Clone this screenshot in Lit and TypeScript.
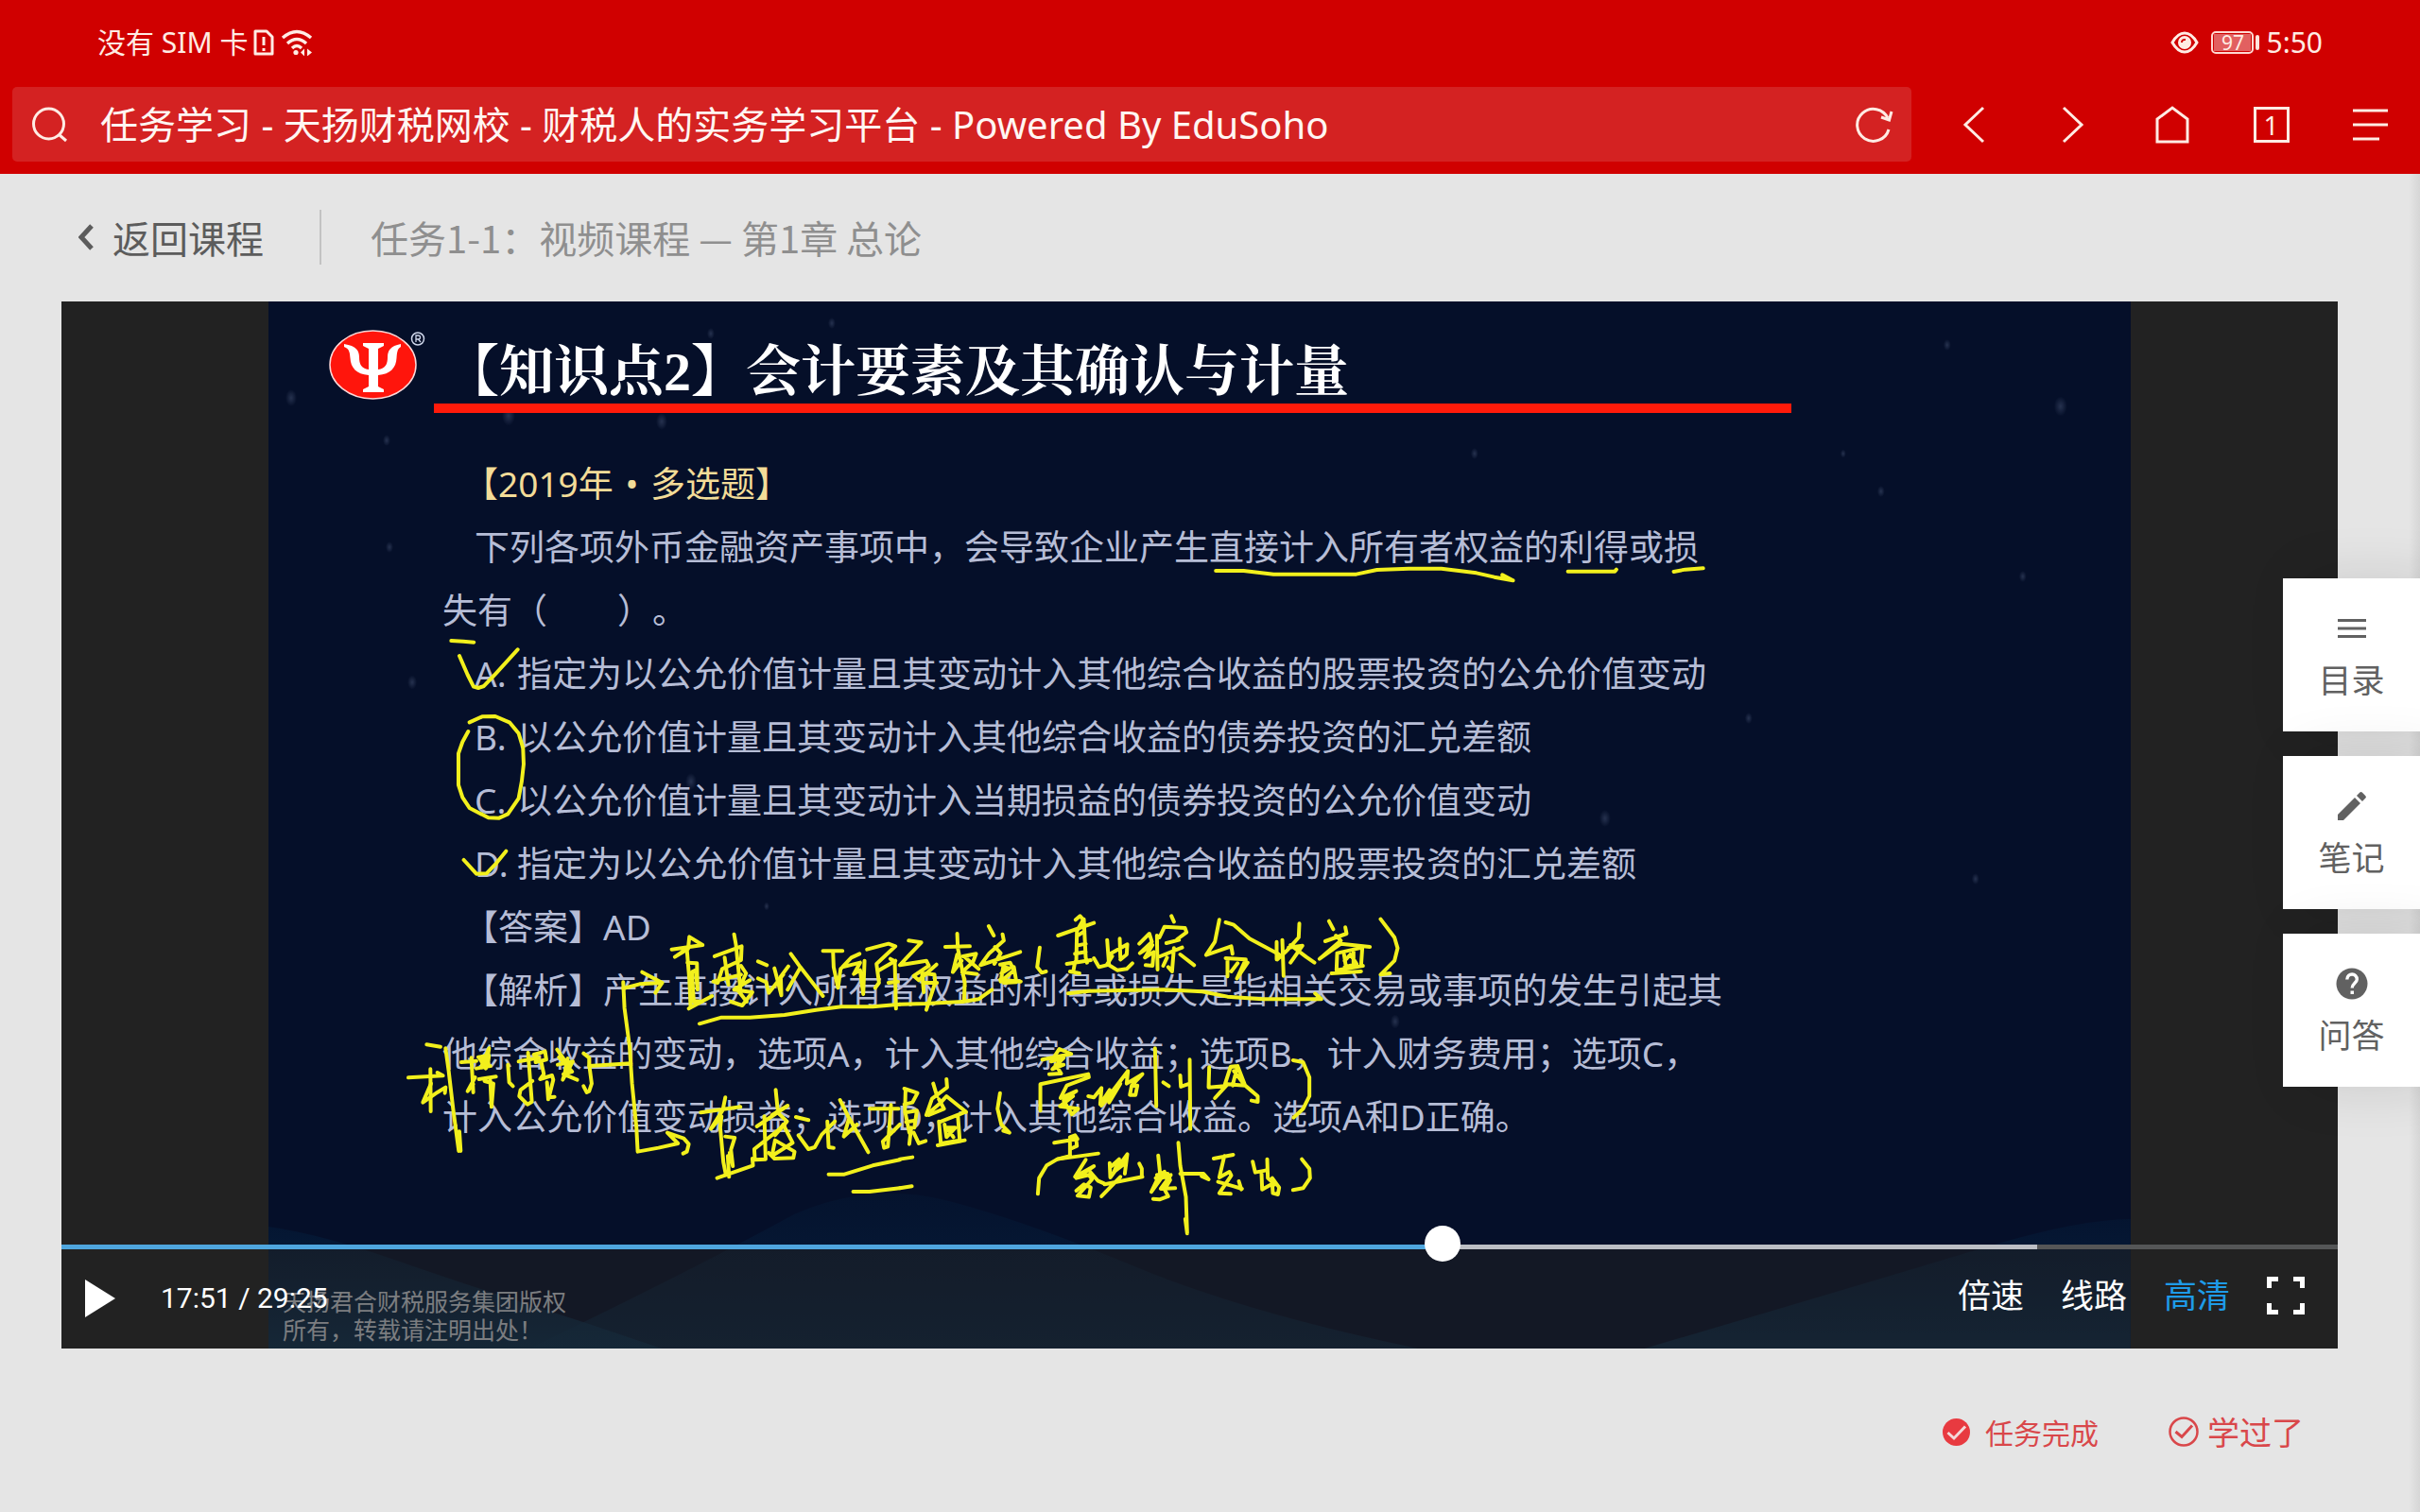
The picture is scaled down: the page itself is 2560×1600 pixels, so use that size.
import { LitElement, html, svg, css } from "lit";
import { customElement, property, state } from "lit/decorators.js";

interface InkGroup {
  transform: string;
  paths: string[];
}

/* Pen strokes drawn by the lecturer, grouped by region of the slide. */
const INK: InkGroup[] = [
  {
    transform: "translate(1200 540) scale(.4209 .3333)",
    paths: [
      "M205 192H275L350 203H558L610 189L690 185H772L860 199L905 212L952 223M925 205L952 223L930 217",
      "M1090 194H1208L1212 188",
      "M1356 195L1385 188L1430 184",
    ],
  },
  {
    transform: "translate(400 660) scale(.3333)",
    paths: [
      "M232 54L270 56L304 59",
      "M258 102L284 162L303 200L318 204L336 198L372 160L443 82",
      "M290 313L330 295L372 294L418 314L446 348L460 394L462 446L456 500L446 555L412 604L384 617L350 616L290 585L268 552L255 512V412L268 375L286 342",
      "M272 750L312 794L344 793L372 764L406 722",
    ],
  },
  {
    transform: "translate(430 960) scale(.3333)",
    paths: [
      "M64 436L108 443",
      "M6 541L116 535L98 525",
      "M76 514L77 648",
      "M78 560L52 620L98 588L124 572L122 590",
      "M124 448L134 520L148 640L166 774M168 712L172 774L162 740",
      "M174 492L222 488M206 478L212 588M218 540L194 584L212 562",
      "M228 476L262 470L258 502L232 480L252 512L262 448L240 500",
      "M222 512L266 504M230 546L284 538M266 550L270 634L276 560L248 552",
      "M322 500L326 556L338 568",
      "M356 490L420 478M386 462L398 618L384 626L358 600L362 580L400 552",
      "M404 468L440 458L444 484L410 492L412 466M428 492L436 530L424 546L462 534L466 548L452 604L470 602M446 556L450 610",
      "M478 452L512 500L496 548L528 490L480 500M484 476L526 522L498 530L542 548M512 480L500 540",
      "M562 464L580 478V500L588 560L580 584L572 588L562 568",
      "M580 504L712 496",
      "M688 238L692 320L708 440L716 560L730 700L734 776L800 764L862 750L828 716L880 734L896 752L890 776L878 782",
      "M688 258L740 244L812 240L748 206M812 240L790 272",
      "M842 134L940 120L898 94L894 132L852 158L890 132L898 230L902 316",
      "M892 176L922 178L924 262L918 200L906 206L912 300M896 322L970 282M902 296L938 300",
      "M1040 86L1046 120L1060 260M978 156L1064 124L1062 168L1002 196L988 240L974 236L1062 214",
      "M1010 160L1022 246M1062 186L1078 210L1060 250L1090 232L1040 262L1098 270L1066 312L1030 300M1046 256L1080 300",
      "M1116 172L1144 184M1116 226L1142 238L1150 272L1196 214M1168 194L1180 240L1190 280L1188 220L1212 188",
      "M1220 148L1250 190L1322 282M1250 192L1210 262",
      "M1322 139H1384M1354 142L1356 190L1370 256L1378 196L1412 160L1438 148M1384 190L1440 176L1420 212L1440 200L1450 276L1454 170",
      "M1462 134L1530 116L1552 124L1492 180L1500 240L1488 256M1536 164L1550 172L1554 322",
      "M1552 170L1500 200M1530 240L1560 236",
      "M930 370L1000 350L1090 350L1200 342L1300 326L1380 316L1480 316L1566 308",
      "M934 652L1060 634M1012 604L1004 644L966 704L1000 664L996 700L1006 810L1014 850",
      "M1012 728L1042 732L1030 770L1036 822L1026 780M1020 790L1024 856M986 860L1100 820L1098 798",
      "M1172 580L1178 640M1112 696L1210 630L1160 660M1136 664L1140 800L1106 802L1104 768L1190 700",
      "M1176 650L1208 680L1170 724L1196 690L1226 748L1160 790L1170 740L1232 776L1228 796L1168 798L1150 780",
      "M1236 666L1276 676M1244 724L1276 768L1296 762L1318 722L1360 680M1336 680L1340 762L1356 764",
      "M1376 612L1400 660L1466 778M1404 674L1388 728L1430 690",
      "M1470 640L1562 640M1538 628L1528 760L1516 764L1512 744L1566 690",
      "M1340 848H1390L1480 820L1566 802",
      "M1418 903H1470L1566 892",
    ],
  },
  {
    transform: "translate(952 960) scale(.3333)",
    paths: [
      "M0 308L80 306L200 300L250 292L292 262",
      "M28 106L68 112L24 158L0 184L84 170L92 186L44 218L60 232L116 182",
      "M70 206L76 270L72 210L110 214L112 240L84 326M80 240H118",
      "M144 126L222 124M182 84L184 130L206 240L204 296M182 150L168 206L196 170",
      "M200 156L242 148L232 174L198 206L244 212M208 160L250 196",
      "M282 60L298 90M326 86L330 106L284 146L256 184L382 142M302 126L320 146L300 180",
      "M318 182L350 176L362 200L320 236L328 190L348 194L322 210M318 230L384 236M362 190L370 238L330 240",
      "M444 128L436 190L450 208L464 204",
      "M502 90L616 50M558 40L572 28L582 40L562 76L560 170M584 38L590 160L594 176M562 92L586 76M562 122L590 116M556 148L590 142",
      "M530 180L606 168M556 174L550 206M540 204L570 210",
      "M616 162L632 190L656 184L674 156M658 104L664 184M664 150L722 118L720 150L700 166M698 100L700 160M664 184L690 200L720 196L738 178",
      "M760 116L792 84L800 110L762 146L802 120L778 160L806 142L802 186L780 184",
      "M862 28L870 46M824 96L840 62L905 66L910 80L880 102M846 114L886 104M826 156L896 128M870 130L864 204L852 190M848 160L836 186M890 150L934 184M816 90L818 198",
      "M1014 40L1000 110L972 152L1052 124L1056 148M1034 48L1060 56L1110 100L1204 150",
      "M1034 162L1098 166L1070 226L1104 176M1040 168V220M1072 178L1052 204",
      "M1196 110V166M1214 104L1218 218M1198 166L1226 140",
      "M1268 52L1266 96L1230 136M1234 128L1278 122L1240 176M1240 120L1290 158L1316 176",
      "M1362 44L1376 70M1414 64L1418 84L1350 108M1384 90L1400 106L1332 164L1400 116L1492 126",
      "M1388 148L1386 200L1470 186M1388 146L1468 128L1464 186M1410 150L1416 190M1440 140V184M1412 170L1430 150L1450 180L1412 190M1370 210L1464 204",
      "M1526 38L1570 96L1580 130L1570 170L1526 214L1556 210",
      "M534 274L600 266L700 264L840 262L960 268L1040 284L1150 292L1338 292L1318 274",
      "M452 484L544 466L506 450L480 490L520 478L484 514L520 500L494 500L512 528L474 530",
      "M446 646V562L598 530L600 540L530 566L510 606L560 584L520 610L550 600L508 632L566 640L546 658L520 614",
      "M598 600L616 604L640 574L636 626L666 580L664 620L700 560L640 630L724 520L720 560L770 530L736 566L730 596L748 596L754 566L736 568",
      "M810 448L814 632M836 556L854 568M890 534L892 570L920 560M920 484L922 704",
      "M982 508L980 572L1030 568L1050 506L1072 504L1096 566L1040 562L1000 606M1072 504L1056 566M1060 520L1096 566L1136 600L1136 618L1116 614",
      "M1248 486L1280 492L1300 540V600L1280 640L1250 668",
      "M106 560L118 600M148 546L150 572L102 608L84 660L130 620L148 600L210 650M124 610L140 640L92 660",
      "M124 680L130 750L190 740M126 682L208 650L184 660L190 740M142 690L148 730L176 700L150 700L170 730M120 756L206 740",
      "M14 576L56 590L40 620L14 626M18 580L16 650M16 652L54 646L46 700M18 656L30 716M20 682L44 678M36 700L30 752M44 716L60 750L82 742",
      "M318 590L310 640L322 690L348 716L328 710",
      "M490 748L564 736L556 724L540 730V790L500 800L630 782M540 768L562 758L560 740",
      "M438 910L442 860L466 820L500 800L530 794",
      "M590 802L556 856L616 822L560 860L600 850L610 864L564 916L600 920L606 890L584 880L560 900M604 840L628 868L650 878",
      "M666 812L668 858L722 784L714 846M672 822L696 800L680 840L716 812M650 880L770 856M760 814L768 830V856M700 856L640 918",
      "M820 788L826 846L798 904L830 860L860 850L828 894L874 892M816 850L850 846L858 866L840 896L852 918L824 928L804 926M812 860L840 840L846 860",
      "M884 748L890 820L908 920L912 1036L906 990M890 846L964 846L980 864L958 854",
      "M996 798L1058 786M1030 790L1014 858L1046 840L1052 852L1014 908L1050 910M1010 872L1060 886L1086 894M1076 870L1084 896",
      "M1120 808L1128 842L1160 836M1166 800L1168 860L1190 880M1148 846L1150 896L1190 874M1182 860L1204 890L1200 912L1184 908L1182 876",
      "M1276 800L1300 830L1302 860L1280 892L1248 898",
      "M0 800L40 794M0 892L38 886",
    ],
  },
];

const STARS: [number, number, number][] = [
  [308, 421, 6], [538, 440, 7], [700, 446, 6], [409, 466, 4], [412, 579, 4],
  [752, 353, 4], [880, 342, 4], [436, 722, 5], [731, 827, 6], [811, 959, 3],
  [2180, 430, 7], [2060, 365, 4], [1990, 520, 4], [2140, 610, 4], [1698, 866, 6],
  [1476, 1081, 5], [1850, 760, 4], [2090, 930, 4], [1950, 480, 3], [1560, 480, 4],
];

const OPTIONS = [
  ["A.", "指定为以公允价值计量且其变动计入其他综合收益的股票投资的公允价值变动"],
  ["B.", "以公允价值计量且其变动计入其他综合收益的债券投资的汇兑差额"],
  ["C.", "以公允价值计量且其变动计入当期损益的债券投资的公允价值变动"],
  ["D.", "指定为以公允价值计量且其变动计入其他综合收益的股票投资的汇兑差额"],
];

const clock = (s: number) =>
  `${Math.floor(s / 60)}:${String(Math.floor(s % 60)).padStart(2, "0")}`;

@customElement("browser-bar")
class BrowserBar extends LitElement {
  static styles = css`
    :host {
      display: block;
      background: #d00000;
      color: #ffece4;
      font-family: "Noto Sans", "Noto Sans CJK SC", sans-serif;
    }
    .status {
      display: flex;
      justify-content: space-between;
      align-items: center;
      height: 92px;
      padding: 0 103px 2px;
      box-sizing: border-box;
      font-size: 30px;
      line-height: 40px;
    }
    .group {
      display: flex;
      align-items: center;
    }
    .sim {
      margin-left: 6px;
    }
    .wifi {
      margin-left: 7px;
    }
    .battery {
      display: flex;
      align-items: center;
      margin: 0 7px 0 13px;
    }
    .cell {
      width: 45px;
      height: 24px;
      padding: 1px;
      box-sizing: border-box;
      border: 2px solid #ffd9d2;
      border-radius: 5px;
      display: flex;
    }
    .level {
      flex: 1;
      background: #e26060;
      font-size: 21px;
      line-height: 18px;
      text-align: center;
    }
    .nub {
      width: 4px;
      height: 16px;
      margin-left: 2px;
      border-radius: 2px;
      background: #ffe3dc;
    }
    .toolbar {
      display: flex;
      padding: 0 0 13px 13px;
    }
    .address {
      flex: 1;
      display: flex;
      align-items: center;
      height: 79px;
      margin-right: 13px;
      padding: 0 19px 0 21px;
      border-radius: 5px;
      background: #d42222;
    }
    .url {
      flex: 1;
      margin: 0 20px 0 34px;
      padding: 0;
      border: 0;
      outline: 0;
      background: none;
      color: #fff6f2;
      font: 40px/54px "Noto Sans", "Noto Sans CJK SC", sans-serif;
    }
    button {
      display: grid;
      place-items: center;
      padding: 0;
      border: 0;
      background: none;
      color: inherit;
    }
    .tool {
      width: 105px;
    }
    svg {
      display: block;
      fill: none;
      stroke: currentColor;
      stroke-width: 3;
    }
    .tabs {
      width: 38px;
      height: 38px;
      box-sizing: border-box;
      border: 3px solid currentColor;
      font: 28px/32px "Noto Sans", sans-serif;
      text-align: center;
    }
  `;

  render() {
    return html`
      <div class="status">
        <div class="group">
          <span>没有 SIM 卡</span>
          <svg class="sim" width="22" height="28" viewBox="0 0 22 28">
            <path d="M2 2H14L20 8V26H2Z" stroke-linejoin="round" />
            <path d="M11 8V17M11 20V23" />
          </svg>
          <svg class="wifi" width="34" height="28" viewBox="0 0 34 28">
            <path d="M2 9Q17 -4 32 9M7 15Q17 6 27 15M12 20Q17 15 22 20" stroke-width="3.4" />
            <circle cx="16" cy="24.5" r="2.6" fill="currentColor" stroke="none" />
            <path d="M21 24.500L25 20.500V28.500ZM33 24.500L28 20.500V28.500Z" fill="currentColor" stroke="none" />
          </svg>
        </div>
        <div class="group">
          <svg width="30" height="24" viewBox="0 0 30 24">
            <path d="M2 12C6 5 10 2 15 2S24 5 28 12C24 19 20 22 15 22S6 19 2 12Z" />
            <circle cx="15" cy="12" r="7" fill="currentColor" stroke="none" />
            <path d="M12 12Q12 8.500 16 9" stroke="#d00000" stroke-width="2" />
          </svg>
          <div class="battery">
            <span class="cell"><span class="level">97</span></span><span class="nub"></span>
          </div>
          <span>5:50</span>
        </div>
      </div>
      <div class="toolbar">
        <div class="address">
          <svg width="38" height="38" viewBox="0 0 38 38">
            <circle cx="17.500" cy="18" r="16" />
            <path d="M28 29L36 36" />
          </svg>
          <input
            class="url"
            type="text"
            aria-label="地址"
            .value=${"任务学习 - 天扬财税网校 - 财税人的实务学习平台 - Powered By EduSoho"}
          />
          <button aria-label="刷新">
            <svg width="40" height="38" viewBox="0 0 40 38">
              <path d="M35 24A17 17 0 1 1 34 12" />
              <path d="M38 5L35.500 14L27 11" />
            </svg>
          </button>
        </div>
        <button class="tool" aria-label="后退">
          <svg width="24" height="40" viewBox="0 0 24 40"><path d="M22 2L3 20L22 38" /></svg>
        </button>
        <button class="tool" aria-label="前进">
          <svg width="24" height="40" viewBox="0 0 24 40"><path d="M2 2L21 20L2 38" /></svg>
        </button>
        <button class="tool" aria-label="主页">
          <svg width="36" height="42" viewBox="0 0 36 42"><path d="M2 39V15L18 3L34 15V39Z" /></svg>
        </button>
        <button class="tool" aria-label="标签页"><span class="tabs">1</span></button>
        <button class="tool" aria-label="菜单">
          <svg width="38" height="34" viewBox="0 0 38 34"><path d="M0 2H37M0 17H37M0 32H28" /></svg>
        </button>
      </div>
    `;
  }
}

@customElement("lesson-slide")
class LessonSlide extends LitElement {
  static styles = css`
    :host {
      position: relative;
      display: flex;
      flex-direction: column;
      padding: 30px 0 6px 64px;
      box-sizing: border-box;
      background: #050f29;
      color: #b6bdd6;
      text-spacing-trim: space-all;
      white-space: nowrap;
    }
    .scene,
    .ink {
      position: absolute;
      inset: 0;
      width: 100%;
      height: 100%;
    }
    .stroke {
      fill: none;
      stroke: #f2f01c;
      stroke-width: 4px;
      stroke-linecap: round;
      stroke-linejoin: round;
      vector-effect: non-scaling-stroke;
    }
    .head {
      position: relative;
      display: flex;
      gap: 7px;
      margin-right: 359px;
    }
    .logo {
      flex: none;
    }
    .title {
      flex: 1;
      margin: 6px 0 0;
      padding: 6px 0 0 11px;
      border-bottom: 10px solid #ff1a0a;
      color: #fff;
      font: 700 58px/66px "Liberation Serif", "Noto Serif CJK SC", "Noto Sans CJK SC", serif;
    }
    .body {
      position: relative;
      margin: 41px 0 0 120px;
      font: 37px/67px "Noto Sans", "Noto Sans CJK SC", sans-serif;
    }
    p,
    ol {
      margin: 0;
      padding: 0;
      list-style: none;
    }
    .indent {
      padding-left: 34px;
    }
    .note {
      padding-left: 22px;
    }
    .tag {
      color: #f3dc98;
    }
    .dot {
      padding: 0 3px;
    }
    .option {
      display: grid;
      grid-template-columns: 45px 1fr;
    }
    .copyright {
      position: relative;
      margin: auto 0 0 -49px;
      color: #d5d8de;
      font: 25px/30px "Noto Sans CJK SC", sans-serif;
    }
  `;

  render() {
    return html`
      <svg class="scene" viewBox="284 319 1970 1108" preserveAspectRatio="none" aria-hidden="true">
        <defs>
          <linearGradient id="wave" x1="0" y1="0" x2="0" y2="1">
            <stop offset="0" stop-color="#04203f" stop-opacity=".4" />
            <stop offset="1" stop-color="#0a3050" stop-opacity=".9" />
          </linearGradient>
          <radialGradient id="star">
            <stop offset="0" stop-color="#8fa0c8" stop-opacity=".24" />
            <stop offset="1" stop-color="#8fa0c8" stop-opacity="0" />
          </radialGradient>
        </defs>
        <path fill="url(#wave)" d="M284 1298Q340 1306 420 1334T620 1400L700 1427H284Z" />
        <path fill="url(#wave)" opacity=".6" d="M560 1427Q740 1340 840 1285Q920 1250 1000 1270Q1080 1290 1200 1340T1500 1427Z" />
        <path fill="url(#wave)" opacity=".8" d="M1740 1427Q2000 1350 2100 1320T2254 1290V1427Z" />
        ${STARS.map(
          ([x, y, r]) => svg`<ellipse cx=${x} cy=${y} rx=${r} ry=${r * 1.5} fill="url(#star)" />`
        )}
      </svg>

      <div class="head">
        <svg class="logo" width="104" height="74" viewBox="0 0 104 74" aria-hidden="true">
          <ellipse cx="46.500" cy="37" rx="45.500" ry="36" fill="#ff150c" stroke="#ffd8d8" stroke-width="1.5" />
          <path
            fill="#fff"
            d="M36 14H58V17L52 20V42C60 41 62 36 62 29C62 22 65 17 76 15V18C72 20 72 25 71.500 30C71 40 65 47 52 48V60L58 63V66H36V63L42 60V48C29 47 23 40 22.500 30C22 25 22 20 16 18V15C29 17 32 22 32 29C32 36 34 41 42 42V20L36 17Z"
          />
          <circle cx="94" cy="9.500" r="6.500" fill="none" stroke="#cfd6ea" stroke-width="1.5" />
          <path d="M92 13V6H94.500Q96.500 6 96.500 8T94.500 10H92M94.500 10L97 13" fill="none" stroke="#cfd6ea" stroke-width="1.3" />
        </svg>
        <h1 class="title">【知识点2】会计要素及其确认与计量</h1>
      </div>

      <div class="body">
        <p class="note tag">【2019年<span class="dot"> • </span>多选题】</p>
        <p class="indent">下列各项外币金融资产事项中，会导致企业产生直接计入所有者权益的利得或损</p>
        <p>失有（　　）。</p>
        <ol>
          ${OPTIONS.map(
            ([k, t]) => html`<li class="indent option"><span>${k}</span><span>${t}</span></li>`
          )}
        </ol>
        <p class="note">【答案】AD</p>
        <p class="note">【解析】产生直接计入所有者权益的利得或损失是指相关交易或事项的发生引起其</p>
        <p>他综合收益的变动，选项A，计入其他综合收益；选项B，计入财务费用；选项C，</p>
        <p>计入公允价值变动损益；选项D，计入其他综合收益。选项A和D正确。</p>
      </div>

      <p class="copyright">天扬君合财税服务集团版权<br />所有，转载请注明出处！</p>

      <svg class="ink" viewBox="284 319 1970 1108" preserveAspectRatio="none" aria-hidden="true">
        ${INK.map(
          (g) => svg`<g transform=${g.transform}>
            ${g.paths.map((d) => svg`<path class="stroke" d=${d} />`)}
          </g>`
        )}
      </svg>
    `;
  }
}

@customElement("video-player")
class VideoPlayer extends LitElement {
  @property({ type: Number }) duration = 1765;
  @property({ type: Number }) buffered = 1532;
  @state() private time = 1071;

  static styles = css`
    :host {
      position: relative;
      display: flex;
      justify-content: center;
      aspect-ratio: 2408 / 1108;
      background: #222;
    }
    .slide {
      height: 100%;
      aspect-ratio: 16 / 9;
    }
    .panel {
      position: absolute;
      inset: auto 0 0 0;
    }
    .track {
      position: relative;
      height: 5px;
      background: #555657;
    }
    .loaded,
    .played {
      position: absolute;
      inset: 0 auto 0 0;
      background: #bcbec4;
    }
    .played {
      background: #4fa6de;
    }
    .seek {
      position: absolute;
      left: -19px;
      top: -20px;
      width: calc(100% + 38px);
      height: 38px;
      margin: 0;
      background: none;
      appearance: none;
    }
    .seek::-webkit-slider-thumb {
      appearance: none;
      width: 38px;
      height: 38px;
      border-radius: 50%;
      background: #fff;
    }
    .controls {
      display: flex;
      align-items: center;
      height: 105px;
      padding: 0 35px 11px 25px;
      box-sizing: border-box;
      background: rgba(33, 33, 33, 0.5);
      color: #fff;
    }
    .time {
      margin: 0 auto 0 48px;
      padding-top: 9px;
      font: 30px/36px Roboto, sans-serif;
    }
    button {
      padding: 0;
      border: 0;
      background: none;
      color: inherit;
      font: 35px/48px "Noto Sans CJK SC", sans-serif;
    }
    svg {
      display: block;
    }
    .play {
      padding-top: 10px;
    }
    .menu {
      display: flex;
      align-items: center;
      gap: 39px;
    }
    .full {
      padding-top: 3px;
    }
    .active {
      color: #1e9be8;
    }
  `;

  render() {
    const pct = (v: number) => `width:${(v / this.duration) * 100}%`;
    return html`
      <lesson-slide class="slide"></lesson-slide>
      <div class="panel">
        <div class="track">
          <div class="loaded" style=${pct(this.buffered)}></div>
          <div class="played" style=${pct(this.time)}></div>
          <input
            class="seek"
            type="range"
            aria-label="播放进度"
            min="0"
            .max=${String(this.duration)}
            .value=${String(this.time)}
            @input=${(e: Event) => (this.time = Number((e.target as HTMLInputElement).value))}
          />
        </div>
        <div class="controls">
          <button class="play" aria-label="播放">
            <svg width="32" height="40" viewBox="0 0 32 40"><path d="M0 0L32 20L0 40Z" fill="#fff" /></svg>
          </button>
          <span class="time">${clock(this.time)} / ${clock(this.duration)}</span>
          <div class="menu">
            <button>倍速</button>
            <button>线路</button>
            <button class="active">高清</button>
            <button class="full" aria-label="全屏">
              <svg width="40" height="40" viewBox="0 0 40 40">
                <path d="M2.500 12V2.500H12M28 2.500H37.500V12M37.500 28V37.500H28M12 37.500H2.500V28" fill="none" stroke="#fff" stroke-width="5" />
              </svg>
            </button>
          </div>
        </div>
      </div>
    `;
  }
}

@customElement("app-root")
class AppRoot extends LitElement {
  static styles = css`
    :host {
      display: flex;
      flex-direction: column;
      min-height: 100vh;
      background: #e5e5e5;
      font-family: "Noto Sans CJK SC", sans-serif;
    }
    .page {
      position: relative;
      flex: 1;
      padding: 0 87px 0 65px;
      background: linear-gradient(to left, #d6d6d6, rgba(229, 229, 229, 0) 12px);
    }
    .crumbs {
      display: flex;
      align-items: center;
      height: 135px;
      padding: 0 0 2px 18px;
      box-sizing: border-box;
      font-size: 40px;
      line-height: 58px;
      color: #8f8f8f;
    }
    .back {
      display: flex;
      align-items: center;
      gap: 20px;
      padding-right: 59px;
      border-right: 2px solid #c3c3c3;
      color: #5c5c5c;
      text-decoration: none;
    }
    .task {
      margin: 0 0 0 52px;
      font-size: inherit;
      font-weight: 400;
      text-spacing-trim: space-all;
    }
    .rail {
      position: absolute;
      top: 428px;
      right: 0;
      display: grid;
      gap: 26px;
    }
    .card {
      display: flex;
      flex-direction: column;
      align-items: center;
      width: 145px;
      height: 162px;
      padding: 36px 0 0;
      border: 0;
      background: #fff;
      box-shadow: 20px 0 60px rgba(0, 0, 0, 0.12);
      color: #616161;
      font: 35px/48px "Noto Sans CJK SC", sans-serif;
    }
    .glyph {
      margin-bottom: 12px;
    }
    .foot {
      display: flex;
      justify-content: flex-end;
      align-items: center;
      gap: 74px;
      padding: 63px 36px 0 0;
      color: #d9474a;
    }
    .done,
    .learned {
      display: flex;
      align-items: center;
      line-height: 50px;
    }
    .done {
      gap: 16px;
      font-size: 30px;
    }
    .learned {
      gap: 9px;
      padding: 0;
      border: 0;
      background: none;
      color: inherit;
      font-family: inherit;
      font-size: 34px;
    }
  `;

  render() {
    return html`
      <browser-bar></browser-bar>
      <main class="page">
        <nav class="crumbs">
          <a class="back" href="#course">
            <svg width="16" height="28" viewBox="0 0 16 28">
              <path d="M14 2L3 14L14 26" fill="none" stroke="currentColor" stroke-width="5" />
            </svg>
            返回课程
          </a>
          <h2 class="task">任务1-1：视频课程 — 第1章 总论</h2>
        </nav>

        <video-player></video-player>

        <footer class="foot">
          <span class="done">
            <svg width="29" height="29" viewBox="0 0 29 29">
              <circle cx="14.500" cy="14.500" r="14.500" fill="#e83a40" />
              <path d="M5.500 15L12 21L24 8.500" fill="none" stroke="#f3d9d9" stroke-width="3" />
            </svg>
            任务完成
          </span>
          <button class="learned">
            <svg width="32" height="32" viewBox="0 0 32 32" fill="none" stroke="#d9474a">
              <circle cx="16" cy="16" r="14.500" stroke-width="2.5" />
              <path d="M7.500 16L14 21.500L25 9.500" stroke-width="3" />
            </svg>
            学过了
          </button>
        </footer>

        <aside class="rail">
          <button class="card">
            <svg class="glyph" width="34" height="34" viewBox="0 0 34 34">
              <path d="M2 8.500H32M2 17H32M2 25.500H32" stroke="currentColor" stroke-width="3" />
            </svg>
            目录
          </button>
          <button class="card">
            <svg class="glyph" width="34" height="34" viewBox="0 0 34 34" fill="currentColor">
              <path d="M2 26V32H8L26 14L20 8ZM28 12L31.400 8.600Q32.600 7.400 31.400 6.200L27.800 2.600Q26.600 1.400 25.400 2.600L22 6Z" />
            </svg>
            笔记
          </button>
          <button class="card">
            <svg class="glyph" width="34" height="34" viewBox="0 0 34 34">
              <circle cx="17" cy="17" r="16.500" fill="currentColor" />
              <path d="M11.800 12.500C12 5 22.500 5.500 22.300 12.500C22.200 16 17.200 16.800 17.200 21.500" fill="none" stroke="#fff" stroke-width="3.400" />
              <path d="M15.500 24.500H19V28H15.500Z" fill="#fff" />
            </svg>
            问答
          </button>
        </aside>
      </main>
    `;
  }
}
